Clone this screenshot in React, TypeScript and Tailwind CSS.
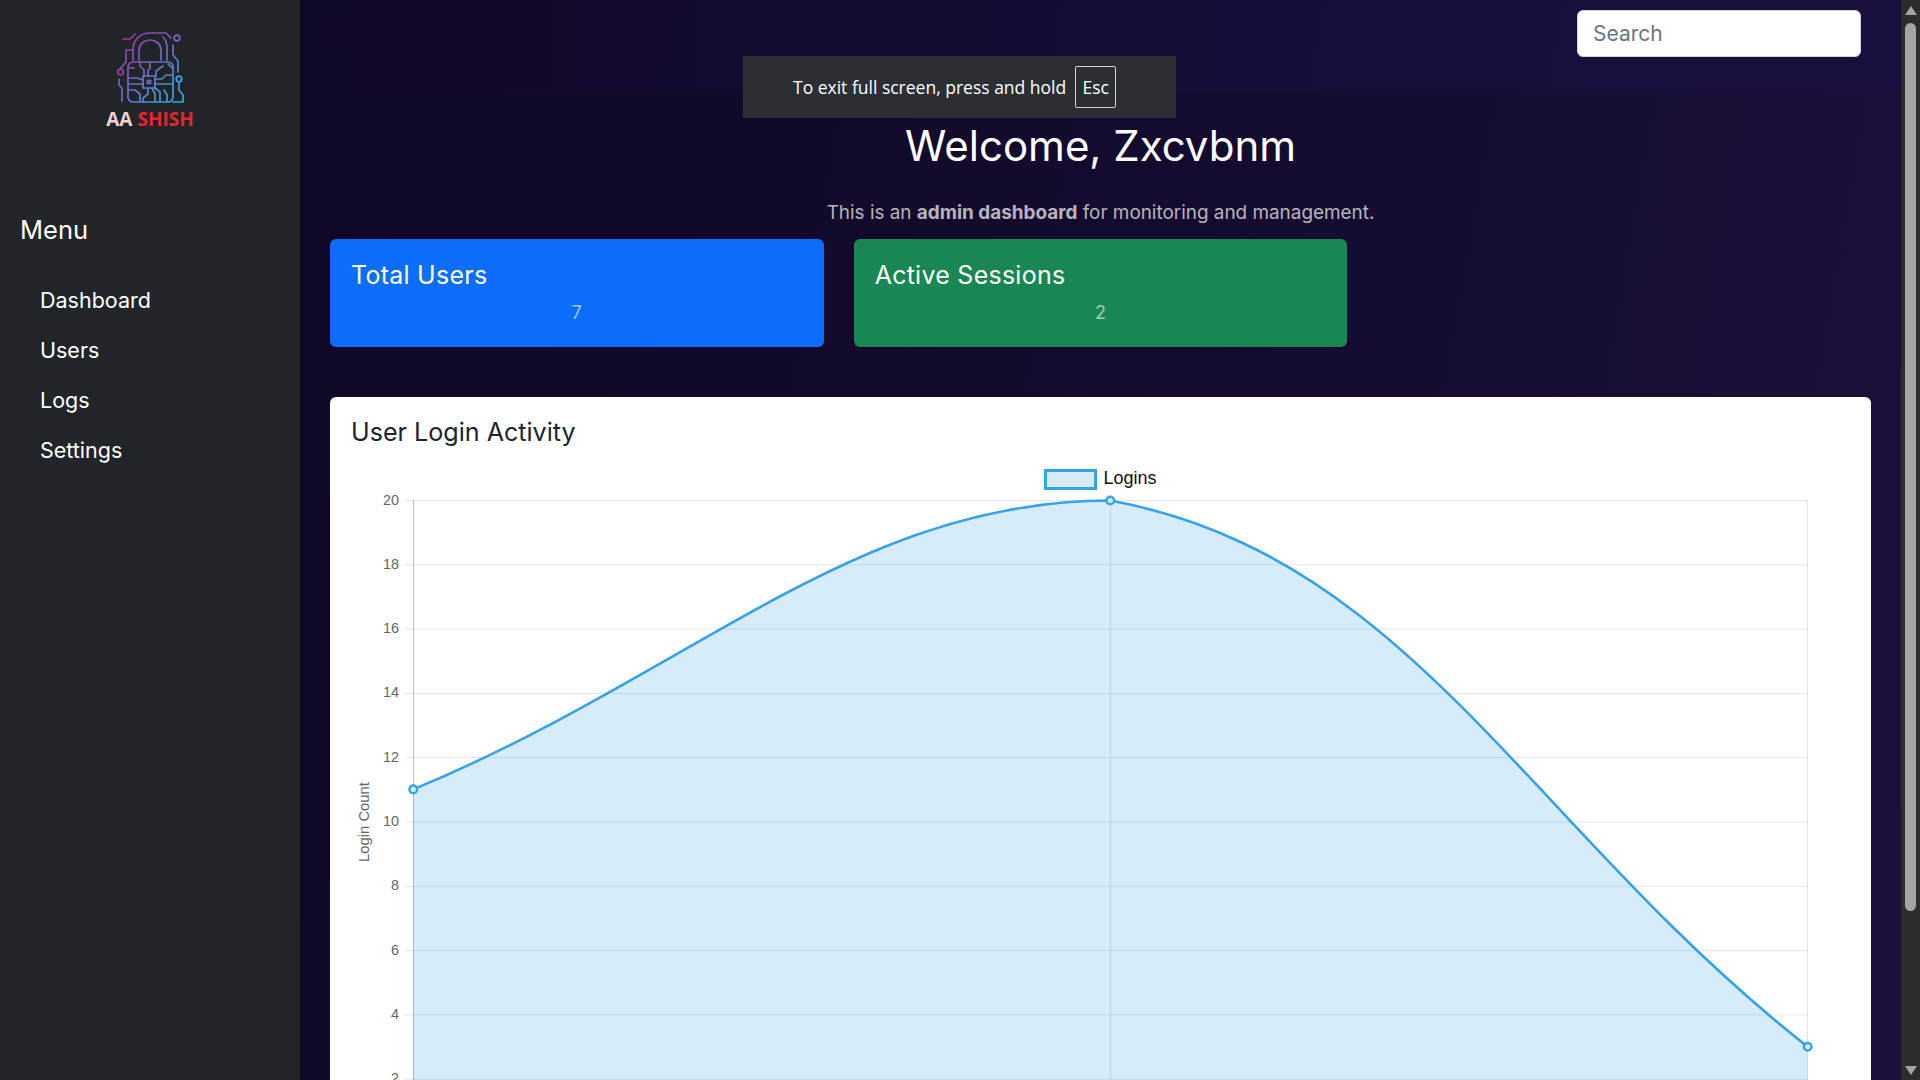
const ticks = [20, 18, 16, 14, 12, 10, 8, 6, 4, 2];
const yOf = (v: number) => 500.5 + (20 - v) * 32.15;
const curve = "M413.3 789.4 C692.1 673.8 853.7 500.5 1110.3 500.5 C1411.5 556.1 1528.7 828.2 1807.7 1046.7";

function Logo() {
  return (
    <svg viewBox="105 28 90 80" className="h-[80px] w-[90px]" fill="none">
      <defs>
        <linearGradient id="lg" gradientUnits="userSpaceOnUse" x1="122" y1="35" x2="182" y2="102">
          <stop offset="0" stopColor="#a0339f" />
          <stop offset="0.5" stopColor="#6f6cc0" />
          <stop offset="1" stopColor="#29b0e4" />
        </linearGradient>
      </defs>
      <g stroke="url(#lg)" strokeWidth="1.7" strokeLinecap="round" strokeLinejoin="round">
        <rect x="128" y="62" width="45" height="40" rx="5" />
        <path d="M133 60V50C133 39 141 33 150 33H166L171 38" />
        <path d="M167 60V48C167 44 166 40 163 37" />
        <path d="M139 60V50C139 44 144 40 150 40C156 40 161 44 161 50V60" />
        <path d="M123 39H130L135 34" />
        <path d="M133 50H126V62L120 69" />
        <path d="M119 79V85L122 88V101" />
        <path d="M173 45V55L178 61V72" />
        <path d="M179 82V90L183 95V102H173" />
        <rect x="143" y="76" width="12" height="12" />
        <rect x="147.5" y="80.5" width="3" height="3" />
        <path d="M150 62V68L148 71V76M140 62V66L144 70V76M163 66L156 71V76" />
        <path d="M129 78H137L143 80M129 84H143M129 90H135L140 94V101" />
        <path d="M155 79H162L166 75H172M155 84H172M155 88L160 92V101M148 88V94L143 98V101M152 88L155 94V101M164 90L167 95V101M134 68H129M168 64L172 68" />
      </g>
      <circle cx="177" cy="38" r="2.8" stroke="#7b62bb" strokeWidth="1.7" />
      <circle cx="120.5" cy="72" r="2.8" stroke="#a0399f" strokeWidth="1.7" />
      <circle cx="179" cy="79" r="2.8" stroke="#35a6dd" strokeWidth="1.7" />
    </svg>
  );
}

function Chart() {
  return (
    <svg viewBox="351 460 1499 640" className="block h-[640px] w-[1499px] font-['Liberation_Sans',sans-serif]">
      <rect x="1045.5" y="470.5" width="50" height="18" fill="#d7ecfb" stroke="#36a2eb" strokeWidth="3" />
      <text x="1103.5" y="484" fontSize="18" fill="#111">Logins</text>
      {ticks.map((t) => (
        <g key={t}>
          <line x1="405" x2="1808" y1={yOf(t)} y2={yOf(t)} stroke="rgba(0,0,0,0.1)" />
          <text x="399" y={yOf(t) + 4} fontSize="14.4" fill="#666" textAnchor="end">{t}</text>
        </g>
      ))}
      <line x1="413.5" x2="413.5" y1="500" y2="1100" stroke="rgba(0,0,0,0.25)" />
      <line x1="1110.5" x2="1110.5" y1="500" y2="1100" stroke="rgba(0,0,0,0.1)" />
      <line x1="1807.5" x2="1807.5" y1="500" y2="1100" stroke="rgba(0,0,0,0.1)" />
      <text transform="translate(369 822) rotate(-90)" fontSize="14.8" fill="#666" textAnchor="middle">Login Count</text>
      <path d={curve + " L1807.7 1100 L413.3 1100 Z"} fill="rgba(54,162,235,0.2)" />
      <path d={curve} fill="none" stroke="#36a2eb" strokeWidth="2.6" />
      {[[413.3, 789.4], [1110.3, 500.5], [1807.7, 1046.7]].map(([x, y]) => (
        <circle key={x} cx={x} cy={y} r="3.8" fill="#d7ecfb" stroke="#36a2eb" strokeWidth="2.5" />
      ))}
    </svg>
  );
}

function Stat({ title, value, color }: { title: string; value: string; color: string }) {
  return (
    <div className={`h-[108px] rounded-[6px] p-[21px] ${color}`}>
      <h5 className="text-[25px] leading-[30px] tracking-[0.25px] text-white">{title}</h5>
      <p className="mt-[11px] text-center text-[18px] leading-[24px] text-white/60">{value}</p>
    </div>
  );
}

export default function App() {
  return (
    <div className="relative flex h-screen w-full overflow-hidden font-['Inter',sans-serif]">
      <aside className="flex w-[300px] shrink-0 flex-col bg-[#212529] text-white">
        <div className="flex flex-col items-center pt-[28px]">
          <Logo />
          <div className="-mt-[1px] font-['Open_Sans',sans-serif] text-[19px] leading-[24px] font-bold">
            <span className="text-[#f2d2cc]">AA </span>
            <span className="text-[#e8232a]">SHISH</span>
          </div>
        </div>
        <h4 className="mt-[84px] pl-[20px] text-[25.5px] leading-[29px]">Menu</h4>
        <nav className="mt-[41px] flex flex-col gap-[20px] pl-[40px] text-[21.5px] leading-[30px]">
          <a>Dashboard</a>
          <a>Users</a>
          <a>Logs</a>
          <a>Settings</a>
        </nav>
      </aside>

      <main className="flex min-w-0 flex-1 flex-col bg-[linear-gradient(100deg,#100725,#150b2f_55%,#1c103c)]">
        <header className="flex h-[92px] shrink-0 justify-end bg-[linear-gradient(90deg,rgba(26,14,63,0),rgba(26,14,63,1))] pt-[10px] pr-[40px]">
          <div className="flex h-[47px] w-[284px] items-center rounded-[6px] border border-[#ced4da] bg-white pl-[15px] text-[21px] text-[#6c757d]">
            Search
          </div>
        </header>
        <div className="flex flex-col px-[30px]">
          <h1 className="mt-[30px] text-center text-[42px] leading-[48px] text-white">Welcome, Zxcvbnm</h1>
          <p className="mt-[31px] text-center text-[18.9px] leading-[24px] text-white/70">
            This is an <b className="font-bold">admin dashboard</b> for monitoring and management.
          </p>
          <div className="mt-[14px] grid grid-cols-3 gap-[30px]">
            <Stat title="Total Users" value="7" color="bg-[#0d6efd]" />
            <Stat title="Active Sessions" value="2" color="bg-[#198754]" />
          </div>
          <section className="mt-[50px] rounded-t-[6px] bg-white pt-[21px] pl-[21px]">
            <h3 className="text-[25.1px] leading-[29px] text-[#212529]">User Login Activity</h3>
            <div className="mt-[13px]">
              <Chart />
            </div>
          </section>
        </div>
      </main>

      <div className="flex w-[19px] shrink-0 flex-col items-center bg-[#2c2c2c]">
        <div className="mt-[6px] h-0 w-0 border-x-[6px] border-b-[9px] border-x-transparent border-b-[#a3a3a3]" />
        <div className="mt-[8px] h-[888px] w-[11px] rounded-full bg-[#a3a3a3]" />
        <div className="mt-[155px] h-0 w-0 border-x-[6px] border-t-[9px] border-x-transparent border-t-[#a3a3a3]" />
      </div>

      <div className="absolute top-[56px] left-[743px] flex h-[62px] w-[433px] items-center bg-[#2b2e33] pl-[50px] font-['Open_Sans',sans-serif] text-[17.5px] text-white">
        <span>To exit full screen, press and hold</span>
        <span className="ml-[9px] flex h-[42px] w-[41px] items-center justify-center rounded-[2px] border border-[#d4d4d4]">Esc</span>
      </div>
    </div>
  );
}
